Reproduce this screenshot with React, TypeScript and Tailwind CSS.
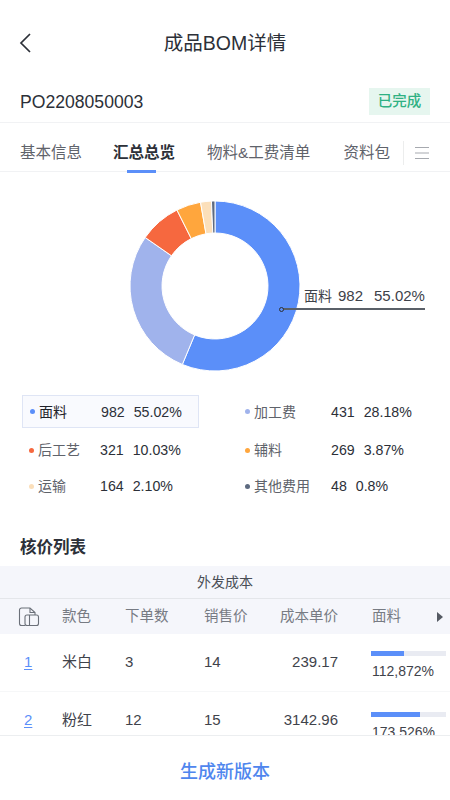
import React from 'react';

const FONT = 'font-["Liberation_Sans","Noto_Sans_CJK_SC",sans-serif]';

const SLICES = [
  { color: '#5b8ff9', end: 202.6 },
  { color: '#a0b3ec', end: 304.8 },
  { color: '#f6683f', end: 333.4 },
  { color: '#ffa63d', end: 350.2 },
  { color: '#fbdfba', end: 357.6 },
  { color: '#5d6a80', end: 360 },
];

const LEGEND = [
  { name: '面料', count: '982', pct: '55.02%', dot: 'bg-[#5b8ff9]', nameW: 'w-[62px]', active: true },
  { name: '加工费', count: '431', pct: '28.18%', dot: 'bg-[#a0b3ec]', nameW: 'w-[77px]' },
  { name: '后工艺', count: '321', pct: '10.03%', dot: 'bg-[#f6683f]', nameW: 'w-[62px]' },
  { name: '辅料', count: '269', pct: '3.87%', dot: 'bg-[#ffa63d]', nameW: 'w-[77px]' },
  { name: '运输', count: '164', pct: '2.10%', dot: 'bg-[#fbdfba]', nameW: 'w-[62px]' },
  { name: '其他费用', count: '48', pct: '0.8%', dot: 'bg-[#5d6a80]', nameW: 'w-[77px]' },
];

const ROWS = [
  { no: '1', color: '米白', qty: '3', price: '14', cost: '239.17', fill: 'w-[33px]', rate: '112,872%', barTop: 'pt-[6px]' },
  { no: '2', color: '粉红', qty: '12', price: '15', cost: '3142.96', fill: 'w-[49px]', rate: '173,526%', barTop: 'pt-[12px]' },
];

const COLS = 'grid grid-cols-[62px_63px_79px_60px_74px_1fr] items-center';

const point = (deg: number, r: number) => {
  const a = ((deg - 90) * Math.PI) / 180;
  return `${(100 + r * Math.cos(a)).toFixed(2)} ${(100 + r * Math.sin(a)).toFixed(2)}`;
};

const slicePath = (from: number, to: number) => {
  const large = to - from > 180 ? 1 : 0;
  return `M${point(from, 85)} A85 85 0 ${large} 1 ${point(to, 85)} L${point(to, 53)} A53 53 0 ${large} 0 ${point(from, 53)} Z`;
};

const Donut = () => (
  <svg width="200" height="200" viewBox="0 0 200 200" className="block">
    {SLICES.map((s, i) => (
      <path
        key={s.color}
        d={slicePath(i === 0 ? 0 : SLICES[i - 1].end, s.end)}
        fill={s.color}
        stroke="#fff"
        strokeWidth="1"
      />
    ))}
  </svg>
);

const SheetIcon = () => (
  <svg width="22" height="20" viewBox="0 0 22 20" fill="none" stroke="#6b7079" strokeWidth="1.1">
    <path d="M7 18.5H3.5a2 2 0 0 1-2-2V3a2 2 0 0 1 2-2h8.5l5 4.5V8" />
    <path d="M12 1v4.5h5" />
    <rect x="7" y="8" width="13.5" height="10.5" rx="2" />
    <path d="M11.5 8v10.5" />
  </svg>
);

export default function App() {
  return (
    <div className={`flex h-[800px] w-[450px] flex-col overflow-hidden bg-white text-[#2c3038] ${FONT}`}>
      <header className="relative flex h-[86px] shrink-0 items-center justify-center pt-[2px]">
        <svg
          width="14"
          height="22"
          viewBox="0 0 14 22"
          fill="none"
          stroke="#2c3038"
          strokeWidth="1.7"
          className="absolute left-[18px] top-[32px]"
        >
          <path d="M12 2 3 11l9 9" />
        </svg>
        <h1 className="text-[19.5px] leading-none">成品BOM详情</h1>
      </header>

      <div className="flex h-[37px] shrink-0 items-start justify-between border-b border-[#f1f2f4] pl-5 pr-5">
        <span className="mt-[5px] text-[17.6px] leading-[22px]">PO2208050003</span>
        <span className="mt-[2px] flex h-[27px] w-[61px] items-center justify-center bg-[#e6f6ef] text-[14.5px] font-medium text-[#2fb183]">
          已完成
        </span>
      </div>

      <nav className="flex h-[49px] shrink-0 items-center border-b border-[#f1f2f4] pl-5 pt-[12px] text-[15.5px] text-[#5f636b]">
        <span>基本信息</span>
        <span className="relative ml-[31px] font-bold text-[#2c3038]">
          汇总总览
          <span className="absolute bottom-[-8px] left-[14px] h-[3px] w-[29px] bg-[#5b8ff9]" />
        </span>
        <span className="ml-8">物料&amp;工费清单</span>
        <span className="ml-[33px]">资料包</span>
        <span className="ml-[13px] h-6 w-px bg-[#eceded]" />
        <svg width="14" height="14" viewBox="0 0 14 14" stroke="#a6a9af" strokeWidth="1" className="ml-[11px]">
          <path d="M0 1.5h14M0 7h14M0 12.5h14" />
        </svg>
      </nav>

      <section className="relative flex h-[223px] shrink-0 justify-center">
        <div className="ml-[-20px] mt-[14px]">
          <Donut />
        </div>
        <div className="absolute left-[281px] top-[136px] h-[2px] w-[144px] bg-[#5a6068]" />
        <span className="absolute left-[279px] top-[135px] size-[5px] rounded-full border border-[#2c3038] bg-[#5b8ff9]" />
        <div className="absolute left-[304px] top-[114px] flex items-center text-[15px] leading-[20px] text-[#3d4149]">
          <span className="text-[14px]">面料</span>
          <span className="ml-[6px]">982</span>
          <span className="ml-[11px]">55.02%</span>
        </div>
      </section>

      <section className="grid h-[140px] shrink-0 grid-cols-[216px_1fr] grid-rows-[33px_44px_28px] pl-[22px] text-[14px] leading-[20px] text-[#5f636b]">
        {LEGEND.map((l) => (
          <div
            key={l.name}
            className={`flex items-center ${
              l.active ? 'w-[177px] border border-[#dfe5f5] bg-[#f9fafe] text-[#1f2229]' : ''
            }`}
          >
            <span className={`ml-[7px] size-[5px] shrink-0 rounded-full ${l.dot}`} />
            <span className={`ml-[4px] shrink-0 ${l.nameW}`}>{l.name}</span>
            <span className="text-[14.2px] text-[#2c3038]">{l.count}</span>
            <span className="ml-[9px] text-[14.2px] text-[#2c3038]">{l.pct}</span>
          </div>
        ))}
      </section>

      <h2 className="h-[31px] shrink-0 pl-5 text-[16.5px] leading-[24px] font-bold">核价列表</h2>

      <section className="min-h-0 flex-1 overflow-hidden">
        <div className="flex h-[33px] items-center justify-center border-b border-[#e4e6ea] bg-[#f5f6fb] text-[14px] text-[#4a4e56]">
          外发成本
        </div>
        <div className={`${COLS} relative h-[35px] bg-[#f5f6fb] text-[14.5px] text-[#777b83]`}>
          <span className="pl-[18px]">
            <SheetIcon />
          </span>
          <span>款色</span>
          <span>下单数</span>
          <span>销售价</span>
          <span className="text-right">成本单价</span>
          <span className="pl-[34px]">面料</span>
          <span className="absolute right-[7px] h-0 w-0 border-y-[5px] border-l-[6px] border-y-transparent border-l-[#555a63]" />
        </div>
        {ROWS.map((r) => (
          <div key={r.no} className={`${COLS} h-[58px] border-b border-[#f6f7f8] text-[15px] text-[#3f434b]`}>
            <span className="pl-6 text-[#5b8ff9] underline underline-offset-2">{r.no}</span>
            <span>{r.color}</span>
            <span>{r.qty}</span>
            <span>{r.price}</span>
            <span className="text-right">{r.cost}</span>
            <div className={`pl-[33px] ${r.barTop}`}>
              <div className="h-[5px] w-[75px] bg-[#e9ebf2]">
                <div className={`h-full bg-[#5b8ff9] ${r.fill}`} />
              </div>
              <div className="mt-[6px] pl-px text-[14px] leading-[18px]">{r.rate}</div>
            </div>
          </div>
        ))}
      </section>

      <footer className="flex h-[65px] shrink-0 items-center justify-center border-t border-[#eceef0] pt-[8px] text-[18px] font-medium text-[#4f86ee]">
        生成新版本
      </footer>
    </div>
  );
}
